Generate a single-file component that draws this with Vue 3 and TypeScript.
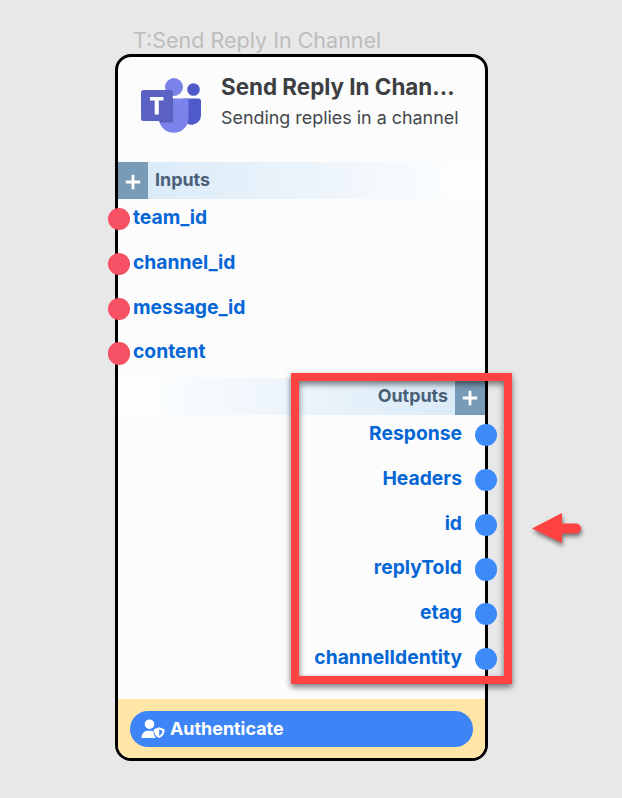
<script setup lang="ts">
interface Port {
  name: string
}

const title = 'Send Reply In Chan…'

const inputs: Port[] = [
  { name: 'team_id' },
  { name: 'channel_id' },
  { name: 'message_id' },
  { name: 'content' },
]

const outputs: Port[] = [
  { name: 'Response' },
  { name: 'Headers' },
  { name: 'id' },
  { name: 'replyToId' },
  { name: 'etag' },
  { name: 'channelIdentity' },
]
</script>

<template>
  <main class="canvas">
    <div class="node-label">T:Send Reply In Channel</div>
    <section class="node">
      <header class="head">
        <svg class="logo" viewBox="0 0 62 56" width="62" height="56">
          <circle cx="53.5" cy="12.5" r="6.3" fill="#5059c9" />
          <path d="M43 21.5h15.500a2.500 2.500 0 0 1 2.500 2.500v14.500a9.500 9.500 0 0 1-18 4z" fill="#5059c9" />
          <circle cx="34" cy="10" r="9" fill="#7b83eb" />
          <path d="M24 21.500h22a2.500 2.500 0 0 1 2.500 2.500v17a14.800 14.800 0 0 1-29.600 0V26z" fill="#7b83eb" />
          <path d="M17 13.500h13.500a2.500 2.500 0 0 1 2.500 2.500v27a2.500 2.500 0 0 1-2.500 2.500H19.500z" fill="#3d438f" opacity=".6" />
          <rect x="1" y="13" width="31" height="31" rx="2.5" fill="#5b62c3" />
          <path d="M10 20h13.500v3.600h-4.700v14h-4.100v-14H10z" fill="#fff" />
        </svg>
        <div class="titles">
          <h1>{{ title }}</h1>
          <p>Sending replies in a channel</p>
        </div>
      </header>

      <div class="bar bar-in">
        <button class="add" type="button">
          <svg viewBox="0 0 16 16" width="16" height="16"><path d="M8 .8v14.4M.8 8h14.4" /></svg>
        </button>
        <span class="bar-text">Inputs</span>
      </div>
      <ul class="ports ports-in">
        <li v-for="port in inputs" :key="port.name">
          <i class="dot"></i><span>{{ port.name }}</span>
        </li>
      </ul>

      <div class="bar bar-out">
        <span class="bar-text">Outputs</span>
        <button class="add" type="button">
          <svg viewBox="0 0 16 16" width="16" height="16"><path d="M8 .8v14.4M.8 8h14.4" /></svg>
        </button>
      </div>
      <ul class="ports ports-out">
        <li v-for="port in outputs" :key="port.name">
          <span>{{ port.name }}</span><i class="dot"></i>
        </li>
      </ul>

      <footer class="foot">
        <button class="auth" type="button">
          <svg viewBox="0 0 24 20" width="24" height="20">
            <circle cx="8.5" cy="5.2" r="4.8" fill="#fff" />
            <path d="M.5 19c0-4.600 2.800-7.300 6.800-7.300h2.400c1.200 0 2 .2 2.800.6.100 3 .8 5.200 2.700 6.700z" fill="#fff" />
            <path d="M18.200 8.200l5.300 2.100c.2 4-1.300 7-5.300 8.800-4-1.800-5.500-4.800-5.300-8.800z" fill="#fff" />
            <path d="M18.200 10.400v6.300c2.200-1.200 3.100-2.800 3.200-5z" fill="#3d84f7" />
          </svg>
          <span>Authenticate</span>
        </button>
      </footer>
    </section>

    <div class="highlight"></div>
    <svg class="arrow" viewBox="0 0 60 44" width="60" height="44">
      <path d="M4 20.5L34 5v10.5h14a5 5 0 0 1 0 10H34V35z" fill="#ff4343" />
    </svg>
  </main>
</template>

<style>
body {
  background: #e8e8e8;
}
</style>

<style scoped>
* {
  box-sizing: border-box;
}
.canvas {
  position: relative;
  height: 798px;
  padding: 26px 0 0 115px;
  overflow: hidden;
  background: #e8e8e8;
  font-family: Inter, sans-serif;
  font-variation-settings: 'opsz' 14;
}
.node-label {
  height: 28px;
  padding-left: 18px;
  font-size: 21.5px;
  line-height: 29px;
  color: #bdbdbd;
  white-space: nowrap;
}
.node {
  display: flex;
  flex-direction: column;
  width: 373px;
  height: 707px;
  border: 3px solid #000;
  border-radius: 16px;
  background: #fcfcfc;
}
.head {
  display: flex;
  height: 105px;
  padding: 20px 25px 0 22px;
}
.logo {
  flex: none;
  margin-right: 19px;
}
.titles {
  width: 240px;
  min-width: 0;
}
h1 {
  margin: -4px 0 0;
  font-size: 22.4px;
  font-weight: 700;
  line-height: 28px;
  color: #3d3f43;
  white-space: nowrap;
}
p {
  margin: 4px 0 0;
  font-size: 17.9px;
  line-height: 26px;
  color: #44474b;
  white-space: nowrap;
}
.bar {
  display: flex;
  height: 37px;
}
.bar-in {
  background: linear-gradient(90deg, #d7e9f7, #fff);
}
.bar-out {
  justify-content: flex-end;
  background: linear-gradient(270deg, #d7e9f7, #fff);
}
.bar-text {
  padding: 0 7px;
  font-size: 17.9px;
  font-weight: 700;
  line-height: 36px;
  color: #4a6078;
}
.add {
  display: flex;
  align-items: center;
  justify-content: center;
  width: 30px;
  height: 37px;
  padding: 2px 0 0;
  border: 0;
  background: #789bb8;
}
.add path {
  stroke: #fff;
  stroke-width: 2.8;
}
.ports {
  margin: 0;
  padding: 0;
  list-style: none;
}
.ports-in {
  height: 179px;
}
.ports-out {
  height: 284px;
}
.ports li {
  display: flex;
  height: 44.75px;
  font-size: 19.3px;
  font-weight: 700;
  line-height: 37.4px;
  color: #0566d6;
}
.dot {
  flex: none;
  width: 22.4px;
  height: 22.4px;
  margin-top: 9px;
  border-radius: 50%;
}
.ports-in .dot {
  margin-right: 3px;
  margin-left: -10.4px;
  background: #f55064;
}
.ports-out li {
  justify-content: flex-end;
}
.ports-out .dot {
  margin-right: -12px;
  margin-left: 12.6px;
  background: #3d8af9;
}
.foot {
  height: 59px;
  padding: 11.5px 12px 0;
  border-radius: 0 0 13px 13px;
  background: #ffe6a6;
}
.auth {
  display: flex;
  align-items: center;
  width: 100%;
  height: 36px;
  padding: 0 11px;
  border: 0;
  border-radius: 18px;
  background: #3d84f7;
  font: 700 17.9px Inter, sans-serif;
  font-variation-settings: 'opsz' 14;
  color: #fff;
}
.auth span {
  margin-left: 5px;
}
.highlight {
  position: absolute;
  top: 373px;
  left: 291px;
  width: 221px;
  height: 311px;
  border: 8px solid #ff4343;
  filter: drop-shadow(0 3px 3px rgba(0, 0, 0, 0.55));
}
.arrow {
  position: absolute;
  top: 508px;
  left: 528px;
  filter: drop-shadow(1px 3px 2px rgba(0, 0, 0, 0.5));
}
</style>
